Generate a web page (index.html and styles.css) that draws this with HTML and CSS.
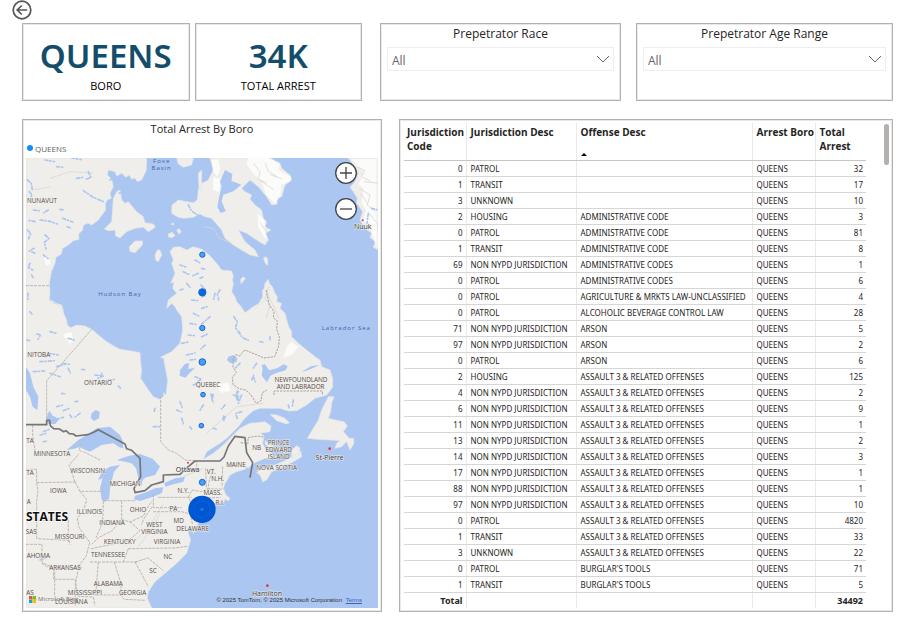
FILE: index.html
```html
<!DOCTYPE html>
<html lang="en">
<head>
<meta charset="utf-8">
<title>Arrests by borough</title>
<link rel="stylesheet" href="styles.css">
</head>
<body>
<header class="topbar">
  <button class="back" type="button" aria-label="Back">
    <svg viewBox="0 0 20 20" width="20" height="20" fill="none" stroke="#555" stroke-width="1.7"><circle cx="10" cy="10" r="8.8"/><path d="M15.2 10H5.5M9.8 5.5 5.2 10l4.6 4.5"/></svg>
  </button>
</header>
<main>
  <div class="summary">
    <div class="cards">
      <section class="panel card"><strong>QUEENS</strong><span>BORO</span></section>
      <section class="panel card"><strong>34K</strong><span>TOTAL ARREST</span></section>
    </div>
    <div class="slicers">
      <section class="panel slicer">
        <label for="race">Prepetrator Race</label>
        <div class="picker"><select id="race"><option>All</option></select>
        <svg viewBox="0 0 14 8" width="14" height="8" fill="none" stroke="#666"><path d="M1 1l6 6 6-6"/></svg></div>
      </section>
      <section class="panel slicer">
        <label for="age">Prepetrator Age Range</label>
        <div class="picker"><select id="age"><option>All</option></select>
        <svg viewBox="0 0 14 8" width="14" height="8" fill="none" stroke="#666"><path d="M1 1l6 6 6-6"/></svg></div>
      </section>
    </div>
  </div>
  <div class="details">
    <section class="panel map-panel">
      <h2>Total Arrest By Boro</h2>
      <div class="legend"><i></i>QUEENS</div>
      <div class="map">
        <svg class="chart" viewBox="18 24 1056 1350" role="img" aria-label="Map of eastern North America">
          <rect class="sea" x="18" y="24" width="1056" height="1350"/>
          <g class="land">
            <path d="M18 24H380L379 60 365 90 352 95 345 84 335 88 328 75 318 82 305 70 290 78 285 65 265 60 262 74 275 88 280 110 270 130 274 145 262 150 256 160 257 180 235 210 215 225 204 219 190 226 188 240 176 252 177 268 160 272 145 285 128 295 124 312 108 322 105 340 94 365 88 400 90 430 88 450 100 458 125 465 130 480 95 450 100 460 125 470 133 495 140 510 142 525 152 533 170 525 195 528 215 538 235 555 260 575 285 590 300 598 340 604 360 608 362 640 365 660 362 685 385 720 400 740 418 748 432 738 430 728 438 735 443 690 435 650 431 625 421 622 455 605 480 580 488 540 485 500 470 480 465 470 445 450 440 475 455 460 445 450 470 430 458 415 462 395 452 400 465 370 455 340 460 330 450 305 460 292 480 290 500 300 520 290 545 298 556 306 568 316 590 340 605 360 635 363 640 380 637 390 640 400 635 425 645 440 650 455 662 468 675 488 700 470 735 450 705 480 728 440 728 420 733 415 735 400 745 388 748 400 757 410 765 430 772 440 770 455 785 460 780 475 795 490 806 530 815 545 815 560 835 580 860 600 875 612 885 620 900 630 905 650 930 660 938 685 938 712 920 735 885 745 860 765 830 782 805 783 780 775 720 775 700 782 685 795 670 810 655 830 620 865 600 880 560 905 550 928 580 910 610 885 630 865 660 835 690 820 735 815 753 828 750 845 720 850 732 858 728 880 735 895 745 905 770 920 770 923 735 925 705 938 695 945 684 955 680 950 675 958 650 965 630 975 622 990 615 1000 610 1015 618 1035 630 1045 625 1053 615 1046 612 1056 590 1057 575 1060 555 1080 540 1094 535 1120 520 1152 523 1140 515 1145 508 1125 505 1150 512 1170 500 1210 470 1240 435 1270 405 1295 385 1325 382 1345 395 1374H18Z"/>
            <path d="M570 24H750L780 40 785 55 810 75 815 90 795 105 785 140 770 145 772 162 755 165 740 140 715 110 690 90 665 115 675 125 695 135 690 148 705 165 725 180 730 205 740 215 735 230 752 240 737 250 745 270 735 285 710 270 680 250 655 240 675 275 705 300 715 320 690 315 640 285 615 265 605 240 575 205 555 200 540 192 520 202 490 205 475 202 455 190 456 165 475 150 500 155 520 158 532 150 535 118 546 100 565 90 580 60Z"/>
            <path d="M280 145L290 125 300 120 305 150 315 160 325 155 350 185 370 200 375 218 400 222 406 232 385 245 370 232 345 235 320 245 300 264 287 258 285 240 265 242 253 237 275 215Z"/>
            <path d="M328 290L345 273 368 273 367 285 345 308 330 304Z M405 315L412 300 420 300 425 315 415 335 407 330Z M470 24H520L515 45 490 52 475 42Z M535 70l10-10v70l-8-20Z M445 252l12-5 8 10-10 6-10-3Z M470 240l8-4 6 10-8 5Z M455 220l6-1v6l-6-1Z M662 388l8-8 6 6-8 10-5 5Z M730 325l8-5 5 8 0 18-6-5Z"/>
            <path d="M925 740L942 740 935 760 932 785 925 805 945 810 972 815 982 828 970 845 988 865 1000 865 1002 880 990 900 980 875 965 890 945 895 950 880 960 872 930 870 890 868 862 865 880 835 895 810 905 780Z"/>
            <path d="M750 793L770 795 795 805 808 818 800 822 770 812Z M720 975L710 968 722 957 765 945 800 930 842 903 845 920 820 935 780 955 755 965 740 990 728 995Z M735 872l30 20 38 4-4 7-40-3-23-17Z M815 900l15-13 10 7-5 25-20 6Z"/>
            <path d="M985 24H1075V300L1060 292 1066 275 1050 262 1055 250 1035 235 1020 210 1028 185 1010 160 1012 145 1000 125 990 112 1005 95 1015 70 1000 45Z"/>
          </g>
          <g class="snow">
            <path d="M685 24h60l35 18-5 18 38 20-3 15-25 8-4 35-16 24-28-30-12-38-30-28-15-25Z M575 30l20-2 6 30-10 22-12-18Z M580 80l22 8-5 40-18-10Z M713 190l20 20 3 40 8 20-12-10-18-30Z M994 28h76v262l-18-50-22-30 8-28-14-26 6-40-14-14 15-35Z M800 590l15-15 20 15-20 25-25 8Z M590 705l35-8 7 25-25 7-13-12Z M135 550l20-3 3 18-8 22-9-20-12-6Z M70 318l15 2 8 22-15 5Z"/>
          </g>
          <path class="relief" d="M700 40l20 25-5 22 25 12m-5-60l10 25 25 15m-50 12l40 28m-10-45l35 12M1010 50l25 12-10 18 28 15m-35 20l32 20-8 30 25 20m-45-55l20 30m-10-65l45 5m-30 90l25 30 5 40M720 218l20 28M550 230l30 5 18 30 35 15M740 420l10 30 12 20 14 35M747 410l-12 35 15 20-12 40M90 85l60-20 70 5M40 120l50-10M560 850l90-80 80-10M490 980l60-25M430 1060l-30 50-50 60M420 1090l-20 40-45 60"/>
          <g class="lakes">
            <path d="M18 651L30 670 40 710 55 740 52 780 38 770 30 740 18 720Z M140 900L175 870 200 855 230 835 270 830 300 855 307 870 310 895 298 892 280 880 245 885 210 905 190 897 180 890 160 897Z"/>
            <path d="M245 1050L240 1015 248 985 235 990 245 965 270 950 300 945 282 965 270 1015 268 1045 255 1055Z M290 930L325 918 360 912 398 926 420 950 405 975 378 982 368 990 364 1008 355 985 348 955 335 940Z M342 1048L345 1037 375 1028 405 1015 430 1012 425 1030 395 1042 360 1053Z M432 1000L465 985 495 980 490 995 460 1003 437 1010Z"/>
            <path d="M600 95l15-35 22 12-3 20 30 12-24 20-30 10-5 20 12 30-15 5-10-18 5-28 8-35Z M362 685l20-8 14 12-8 8Z"/>
            <path d="M215 790l12-10 12 5-2 20-15 8-10-10Z M80 800l8-18 10 15 20 10-12 15-22 0Z M625 620l15-5 12 10-3 12-18 3-10-10Z M725 645l10-2 12 18 24-6 20-12 12 6-6 12-28 8-18 8-10 20-16-20 3-20Z M480 660l15-18 12-3-2 18 20-4-20 20-8 10-18-6Z M845 665l28-16 25-4-20 10-20 8Z M570 730l12 3-3 16 4 12-8-8Z M610 795l8 5-6 15-6-8Z M650 720l8 4-6 12 8 15-9 3-5-12Z"/>
            <path class="ponds" d="M22 90l12 10 3 20M28 125l8 10-7 14M75 30l28 5M110 50l20 2M155 24l28 5M205 65l8 18-14 4M170 85l18-3M270 90l15-10 10 10M300 95l18-12 8 8M298 130l16-8M190 122l30 20 35 15M40 180l24 3M60 210l30 4 22 8M85 180l-14 8M120 178l10 2M128 205l30 11M142 230l14 5M45 215l-20-4M22 240l10 10-6 16M75 255l12 10-14 12 5 20M42 295l-14 8 20 8M70 315l16 12M30 340l-6 12 14 8M35 375l5 10M24 430v20M30 485l8 10M90 545l20 5M50 552l12 2-8 14M20 570l12 2M145 565l18 5M60 635l45-3M85 610l30 5M110 650l25-7M40 665l35-2M90 670l30 10M130 640l20 3M145 655l6 14M185 658l14 2M225 675l25 3-18 8M265 690l22-2M245 670v10M295 708l8 8M125 730l14 2M165 755l14-2M110 770l24-6M130 782l20-8M150 795l8 12M180 790l-16 12M70 845l20-8M100 810l30-8M60 855l24-6M70 875l14-2M520 490l16 8M510 520l22 4M505 555l20 2M485 580l20-4M545 475l16-5M570 500l-25 22M545 560l18-8M555 585l-12 12M500 615l25-6M510 630l16-2M525 680l20 8-16 8M520 705l14-6M480 755l8 22M470 780l14 6M485 805l5 16M510 830l8 12M600 420l-8 12 4 18M585 430l-4 18M500 400l10 12M480 345l18 6M490 365l16 8M525 330l14 8M535 370l-18 8M480 420l14-4M515 450l20 2M545 355l10 3M540 385l12-6M543 405l14 14M545 440l14-3M642 500l10 16-6 18 15 16M655 545l12 18 18 8M720 575l14 3M750 560v14M660 640l-14 14M710 640l-10 14M695 690l6-14M640 735l16 4M665 735l-10 25M665 785l-18 6 6 18M615 765l-10 12M580 835l12 4M550 765l-10 16M805 765l3 12M820 750l-3 22M700 680l6 15M405 775l-4 14M400 830h18M60 1230l16-5M30 1345l18 4M130 1350l14 5M500 230l10 14M518 185l18 12M505 165l8 15M1045 190l-4 30M1055 175l15 4"/>
          </g>
          <path class="states" d="M18 407h72M215 538L170 590 80 692V820M422 738V875L445 900 470 910 495 930 530 932V950M38 825v30l8 55M185 905l-8-5 10-25M190 905l20 10 30 15M18 958h32v40l4 25-4 30v58h95M50 998l115-2M165 996l-10-30-8-20 30-35M165 996l15 28 68 0M180 1024l20 25-10 35-18 20 5 28 32 45-10 40-22 30-10 52 8 40 45 2 5 25M50 1111v55l96 5M145 1111v55l0 10M18 1183h48v55l35 15v35M65 1240l15 10 25 3M104 1253h85M104 1288h62v80M146 1170l5 14M104 1253v85l10 15M250 1053l-2 65-20 45M305 1053v55l-30 35-40 20-20 20M250 1052h98M305 1108l25 8 40-18 15-30 12-15M400 1033v40h85M397 1070l-25 35-8 20M400 1085h85l18 5 12-30-10-18 10-20M415 1042h100M515 1020l30 5 25-10M330 1116l30 26-35 30-115 25M325 1196l140-2 37-5M210 1236h145M235 1236l-8 100M283 1236l20 65v40M227 1335h75l10 13 65 3M345 1236l30 55 10 20M345 1236l40-12 45 38M325 1196l-15 40M510 1090l8 35M557 955l2 60M580 955l-12 35-6 35M608 950l-2 60M560 1017h50M552 1043h50"/>
          <path class="coastal-border" d="M738 420l10 45 14 20-2 18 12 10-2 25 8 22-2 28-12 32-32 4-18-8-40-16-15 18-12-4-8 14 0 22 10 18-12 14 2 22 18 12 20 4 14 12 18 28 14-8 4-24 14-8M762 735V723h145v12M662 878l22 3v-18l28-5 18 3"/>
          <path class="border" d="M18 824h62v-13h9l2 16 10 9 17 1 13 8 7-3 10 9 12 1 8 6 35-4 18-7 14-8 80 43 5 14 15 5 25 24 2 55-20 35 3 13 30-6 20-17 35-10v-20l50-2 25-23 20-17h75l12-12 13-33 20-29 30 4 5 45 18 30-8 45"/>
          <g class="cities"><circle cx="504" cy="938" r="3"/><circle cx="1028" cy="211" r="3"/><circle cx="929" cy="896" r="4"/><circle cx="742" cy="1307" r="4"/></g>
          <g class="names">
            <text x="66" y="158">NUNAVUT</text><text x="56" y="622">NITOBA</text><text x="234" y="706">ONTARIO</text><text x="564" y="710">QUEBEC</text>
            <text x="843" y="696">NEWFOUNDLAND</text><text x="842" y="717">AND LABRADOR</text><text x="710" y="901">NB</text><text x="776" y="886">PRINCE</text><text x="776" y="907">EDWARD</text><text x="776" y="927">ISLAND</text><text x="770" y="959">NOVA SCOTIA</text>
            <text x="648" y="952">MAINE</text><text x="574" y="971">VT.</text><text x="593" y="993">N.H.</text><text x="578" y="1035">MASS.</text><text x="600" y="1066">R.I.</text><text x="490" y="1028">N.Y.</text><text x="460" y="1082">PA</text>
            <text x="96" y="918">MINNESOTA</text><text x="30" y="880">TA</text><text x="30" y="974">TA</text><text x="26" y="1062">A</text><text x="203" y="970">WISCONSIN</text><text x="115" y="1028">IOWA</text><text x="315" y="1009">MICHIGAN</text><text x="208" y="1093">ILLINOIS</text><text x="354" y="1085">OHIO</text><text x="276" y="1124">INDIANA</text><text x="403" y="1130">WEST</text><text x="403" y="1151">VIRGINIA</text><text x="476" y="1120">MD</text><text x="518" y="1143">DELAWARE</text><text x="34" y="1151">SAS</text><text x="149" y="1166">MISSOURI</text><text x="299" y="1182">KENTUCKY</text><text x="441" y="1182">VIRGINIA</text><text x="264" y="1221">TENNESSEE</text><text x="444" y="1228">NC</text><text x="399" y="1270">SC</text><text x="55" y="1223">AHOMA</text><text x="135" y="1259">ARKANSAS</text><text x="265" y="1308">ALABAMA</text><text x="195" y="1335">MISSISSIPPI</text><text x="338" y="1335">GEORGIA</text><text x="154" y="1361">LOUISIANA</text><text x="30" y="1334">AS</text>
          </g>
          <g class="towns"><text x="503" y="967">Ottawa</text><text x="1028" y="238">Nuuk</text><text x="929" y="931">St-Pierre</text><text x="741" y="1337">Hamilton</text></g>
          <g class="seas"><text x="425" y="40">Foxe</text><text x="425" y="60">Basin</text><text x="300" y="439">Hudson Bay</text><text x="979" y="541">Labrador Sea</text></g>
          <text class="country" x="81" y="1113">STATES</text>
          <g class="bubbles"><circle cx="547" cy="314" r="8"/><circle class="deep" cx="547" cy="427" r="11"/><circle cx="547" cy="534" r="8"/><circle cx="547" cy="636" r="10"/><circle cx="549" cy="734" r="7"/><circle cx="544" cy="827" r="7"/><circle cx="547" cy="997" r="9"/><circle class="deep big" cx="546" cy="1078" r="41"/><circle class="ring" cx="546" cy="1078" r="25"/><circle class="dot" cx="546" cy="1078" r="4"/></g>
        </svg>
        <div class="zoom-controls">
          <button type="button" aria-label="Zoom in"><svg viewBox="0 0 22 22"><circle cx="11" cy="11" r="10.3"/><path d="M5 11h12M11 5v12"/></svg></button>
          <button type="button" aria-label="Zoom out"><svg viewBox="0 0 22 22"><circle cx="11" cy="11" r="10.3"/><path d="M5 11h12"/></svg></button>
        </div>
        <div class="brand"><svg viewBox="0 0 7 7" width="7" height="7"><path fill="#f35325" d="M0 0h3.3v3.3H0z"/><path fill="#81bc06" d="M3.7 0H7v3.3H3.7z"/><path fill="#05a6f0" d="M0 3.7h3.3V7H0z"/><path fill="#ffba08" d="M3.7 3.7H7V7H3.7z"/></svg>Microsoft Bing</div>
        <div class="credits">© 2025 TomTom, © 2025 Microsoft Corporation <a href="#terms">Terms</a></div>
      </div>
    </section>
    <section class="panel table-panel">
      <table>
        <colgroup><col class="c-code"><col class="c-desc"><col class="c-offense"><col class="c-boro"><col class="c-total"></colgroup>
        <thead><tr><th>Jurisdiction Code</th><th>Jurisdiction Desc</th><th>Offense Desc<svg class="sort" viewBox="0 0 6 3" width="6" height="3"><path d="M0 3l3-3 3 3z"/></svg></th><th>Arrest Boro</th><th>Total Arrest</th></tr></thead>
        <tbody>
        <tr><td>0</td><td>PATROL</td><td></td><td>QUEENS</td><td>32</td></tr>
        <tr><td>1</td><td>TRANSIT</td><td></td><td>QUEENS</td><td>17</td></tr>
        <tr><td>3</td><td>UNKNOWN</td><td></td><td>QUEENS</td><td>10</td></tr>
        <tr><td>2</td><td>HOUSING</td><td>ADMINISTRATIVE CODE</td><td>QUEENS</td><td>3</td></tr>
        <tr><td>0</td><td>PATROL</td><td>ADMINISTRATIVE CODE</td><td>QUEENS</td><td>81</td></tr>
        <tr><td>1</td><td>TRANSIT</td><td>ADMINISTRATIVE CODE</td><td>QUEENS</td><td>8</td></tr>
        <tr><td>69</td><td>NON NYPD JURISDICTION</td><td>ADMINISTRATIVE CODES</td><td>QUEENS</td><td>1</td></tr>
        <tr><td>0</td><td>PATROL</td><td>ADMINISTRATIVE CODES</td><td>QUEENS</td><td>6</td></tr>
        <tr><td>0</td><td>PATROL</td><td>AGRICULTURE &amp; MRKTS LAW-UNCLASSIFIED</td><td>QUEENS</td><td>4</td></tr>
        <tr><td>0</td><td>PATROL</td><td>ALCOHOLIC BEVERAGE CONTROL LAW</td><td>QUEENS</td><td>28</td></tr>
        <tr><td>71</td><td>NON NYPD JURISDICTION</td><td>ARSON</td><td>QUEENS</td><td>5</td></tr>
        <tr><td>97</td><td>NON NYPD JURISDICTION</td><td>ARSON</td><td>QUEENS</td><td>2</td></tr>
        <tr><td>0</td><td>PATROL</td><td>ARSON</td><td>QUEENS</td><td>6</td></tr>
        <tr><td>2</td><td>HOUSING</td><td>ASSAULT 3 &amp; RELATED OFFENSES</td><td>QUEENS</td><td>125</td></tr>
        <tr><td>4</td><td>NON NYPD JURISDICTION</td><td>ASSAULT 3 &amp; RELATED OFFENSES</td><td>QUEENS</td><td>2</td></tr>
        <tr><td>6</td><td>NON NYPD JURISDICTION</td><td>ASSAULT 3 &amp; RELATED OFFENSES</td><td>QUEENS</td><td>9</td></tr>
        <tr><td>11</td><td>NON NYPD JURISDICTION</td><td>ASSAULT 3 &amp; RELATED OFFENSES</td><td>QUEENS</td><td>1</td></tr>
        <tr><td>13</td><td>NON NYPD JURISDICTION</td><td>ASSAULT 3 &amp; RELATED OFFENSES</td><td>QUEENS</td><td>2</td></tr>
        <tr><td>14</td><td>NON NYPD JURISDICTION</td><td>ASSAULT 3 &amp; RELATED OFFENSES</td><td>QUEENS</td><td>3</td></tr>
        <tr><td>17</td><td>NON NYPD JURISDICTION</td><td>ASSAULT 3 &amp; RELATED OFFENSES</td><td>QUEENS</td><td>1</td></tr>
        <tr><td>88</td><td>NON NYPD JURISDICTION</td><td>ASSAULT 3 &amp; RELATED OFFENSES</td><td>QUEENS</td><td>1</td></tr>
        <tr><td>97</td><td>NON NYPD JURISDICTION</td><td>ASSAULT 3 &amp; RELATED OFFENSES</td><td>QUEENS</td><td>10</td></tr>
        <tr><td>0</td><td>PATROL</td><td>ASSAULT 3 &amp; RELATED OFFENSES</td><td>QUEENS</td><td>4820</td></tr>
        <tr><td>1</td><td>TRANSIT</td><td>ASSAULT 3 &amp; RELATED OFFENSES</td><td>QUEENS</td><td>33</td></tr>
        <tr><td>3</td><td>UNKNOWN</td><td>ASSAULT 3 &amp; RELATED OFFENSES</td><td>QUEENS</td><td>22</td></tr>
        <tr><td>0</td><td>PATROL</td><td>BURGLAR'S TOOLS</td><td>QUEENS</td><td>71</td></tr>
        <tr><td>1</td><td>TRANSIT</td><td>BURGLAR'S TOOLS</td><td>QUEENS</td><td>5</td></tr>
        </tbody>
        <tfoot><tr><td>Total</td><td></td><td></td><td></td><td>34492</td></tr></tfoot>
      </table>
      <div class="scrollbar"></div>
    </section>
  </div>
</main>
</body>
</html>
```
FILE: styles.css
```css
* { box-sizing: border-box; }
body {
  margin: 0;
  padding: 0 9px 8px 22px;
  background: #fff;
  color: #252423;
  font-family: "Open Sans", "Noto Sans", sans-serif;
}
button { padding: 0; border: 0; background: none; }
svg { display: block; }
.topbar { height: 23px; margin-left: -10px; }
.back { display: block; }
.panel { border: 1px solid #b3b0ad; box-shadow: inset 0 0 0 1px #e8e8e8; background: #fff; min-width: 0; }
.summary { display: grid; grid-template-columns: 340fr 513fr; gap: 18px; }
.cards { display: grid; grid-template-columns: 1fr 1fr; gap: 5px; }
.slicers { display: grid; grid-template-columns: 241fr 257fr; gap: 15px; }
.card { display: flex; flex-direction: column; align-items: center; height: 78px; padding-top: 11px; }
.card strong { color: #144d6b; font-size: 33px; font-weight: 600; line-height: 42px; font-family: "Noto Sans", sans-serif; }
.card span { color: #000; font-size: 11px; line-height: 18px; }
.slicer { padding: 1px 6px; text-align: center; font-size: 12px; }
.slicer label { display: block; height: 22px; line-height: 18px; }
.picker { position: relative; height: 24px; border: 1px solid #eee; }
.picker select { width: 100%; height: 100%; padding: 3px 4px 0; border: 0; background: none; appearance: none; color: #666; font: 12px "Open Sans", sans-serif; }
.picker svg { position: absolute; right: 3px; top: 7px; pointer-events: none; }
.details { display: grid; grid-template-columns: 360fr 494fr; gap: 17px; margin-top: 18px; }
.map-panel { padding: 0 3px 3px; }
.map-panel h2 { margin: 0; text-align: center; font-size: 11px; font-weight: 400; line-height: 18px; }
.legend { display: flex; align-items: center; gap: 2px; height: 20px; padding-left: 1px; color: #605e5c; font-size: 8px; }
.legend i { width: 6px; height: 6px; border-radius: 50%; background: #118dff; }
.map { position: relative; overflow: hidden; }
.chart { width: 100%; height: auto; }
.sea { fill: #abc6f1; }
.land { fill: #efeeea; stroke: #e2e5e6; stroke-width: 2; stroke-linejoin: round; }
.snow { fill: #fff; opacity: .75; }
.relief { fill: none; stroke: #d7d7d3; stroke-width: 3; opacity: .8; }
.lakes { fill: #abc6f1; }
.ponds { fill: none; stroke: #abc6f1; stroke-width: 5; stroke-linejoin: round; stroke-linecap: round; stroke-dasharray: 9 6 3 7; }
.states { fill: none; stroke: #bdb7b2; stroke-width: 3; stroke-dasharray: 9 3; }
.coastal-border { fill: none; stroke: #aaa39d; stroke-width: 3; stroke-dasharray: 7 3; }
.border { fill: none; stroke: #757575; stroke-width: 5; stroke-linejoin: round; }
.cities { fill: #e33; }
.chart text { text-anchor: middle; }
.names { fill: #594b48; stroke: #efeeea; stroke-width: 3; paint-order: stroke; font-size: 19px; }
.towns { fill: #333; stroke: #efeeea; stroke-width: 3; paint-order: stroke; font-size: 21px; }
.seas { fill: #4164a5; font-size: 18px; letter-spacing: 3px; }
.country { fill: #111; stroke: #fff; stroke-width: 4; paint-order: stroke; font-size: 36px; font-weight: 700; }
.bubbles { fill: #479ff8; stroke: #1769d2; stroke-width: 3; }
.bubbles .deep { fill: #0b66df; }
.bubbles .big { fill: #0057d2; stroke: none; }
.bubbles .ring { fill: none; stroke: #0b66df; stroke-width: 2; }
.bubbles .dot { fill: #3392f5; }
.zoom-controls { position: absolute; right: 21px; top: 4px; display: grid; gap: 14px; }
.zoom-controls svg { width: 22px; height: 22px; fill: #fff; stroke: #444; stroke-width: 1.3; }
.brand { position: absolute; left: 3px; bottom: 5px; display: flex; align-items: center; gap: 2px; color: #777; font-size: 6px; line-height: 8px; }
.credits { position: absolute; right: 16px; bottom: 3px; color: #333; font: 6px/9px "Liberation Sans", sans-serif; white-space: nowrap; }
.credits a { margin-left: 2px; color: #3d65b5; }
.table-panel { display: flex; align-items: flex-start; justify-content: space-between; padding: 3px 3px 2px 4px; }
table { width: 462px; table-layout: fixed; border-collapse: collapse; font-family: "Noto Sans", sans-serif; font-size: 8px; }
.c-code { width: 62px; }
.c-desc { width: 110px; }
.c-offense { width: 176px; }
.c-boro { width: 63px; }
.c-total { width: 51px; }
th, td { padding: 0 3px 0 4px; border-right: 1px solid #eaeaea; white-space: nowrap; text-align: left; }
th:last-child, td:last-child { border-right: 0; }
th { height: 37px; padding: 2px 0 0 4px; border-bottom: 1px solid #c8c6c4; font-family: "Open Sans", sans-serif; font-size: 10px; font-weight: 700; line-height: 14px; vertical-align: top; white-space: normal; }
th:first-child { padding-left: 3px; }
td { height: 16px; border-bottom: 1px solid #d6d6d6; line-height: 15px; }
td:first-child, td:last-child { text-align: right; }
tfoot td { border-bottom: 0; font-size: 9px; font-weight: 700; }
.sort { margin-top: 14px; }
.scrollbar { width: 5px; height: 41px; margin-top: 1px; border-radius: 3px; background: #b3b0ad; }
```
